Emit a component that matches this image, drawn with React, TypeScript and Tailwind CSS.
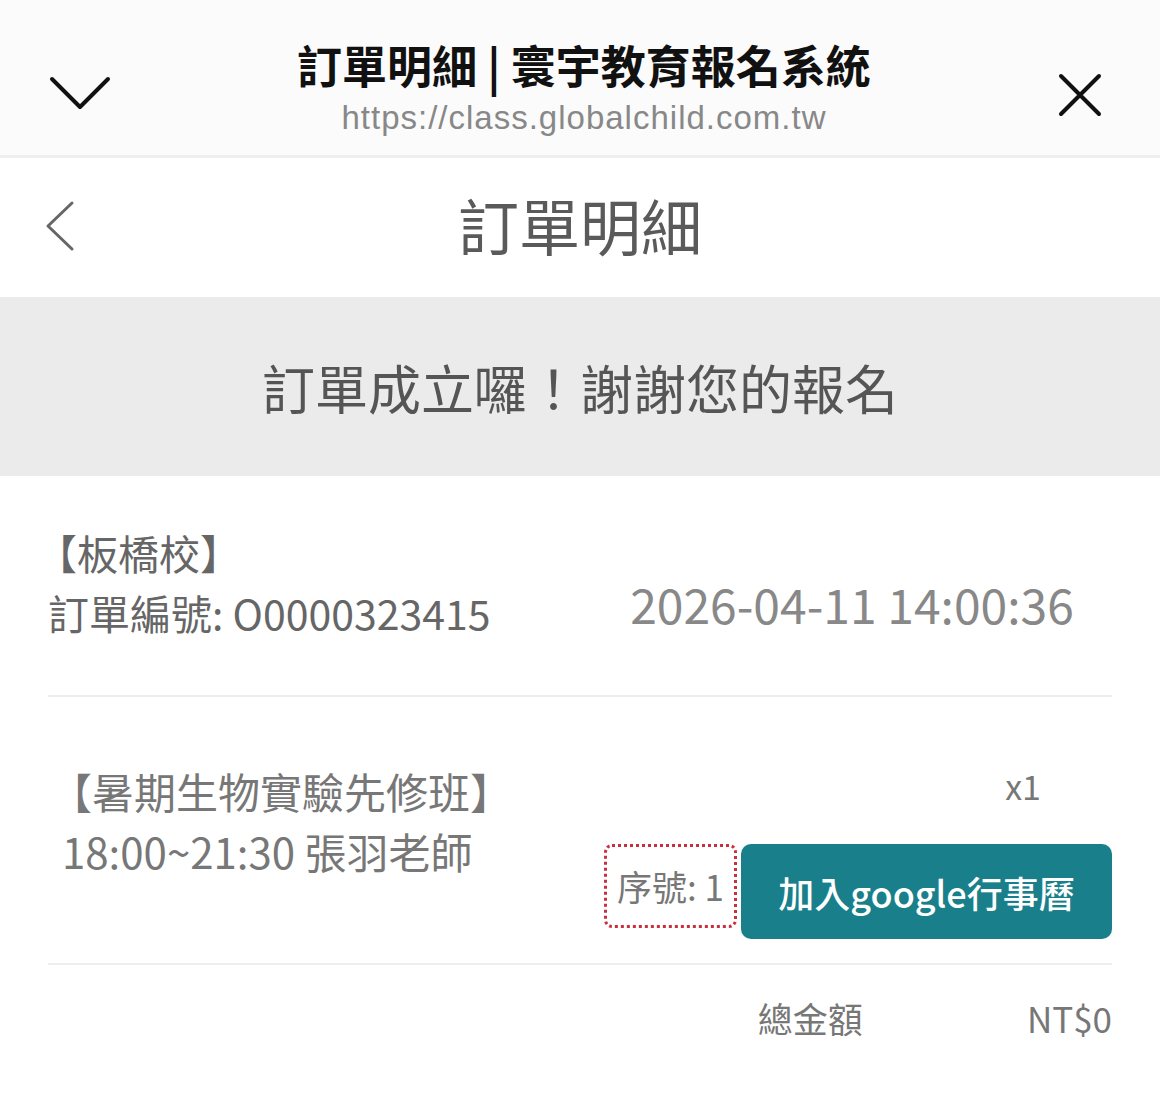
const cjk = { fontFamily: '"Noto Sans CJK TC", "Noto Sans", sans-serif' };

function ChevronDown() {
  return (
    <svg width="64" height="40" viewBox="0 0 64 40" fill="none">
      <path d="M4 6 L32 34 L60 6" stroke="#111" strokeWidth="4" strokeLinecap="round" strokeLinejoin="round" />
    </svg>
  );
}

function CloseIcon() {
  return (
    <svg width="48" height="48" viewBox="0 0 48 48" fill="none">
      <path d="M5 5 L43 43 M43 5 L5 43" stroke="#111" strokeWidth="4" strokeLinecap="round" />
    </svg>
  );
}

function BackIcon() {
  return (
    <svg width="34" height="52" viewBox="0 0 34 52" fill="none">
      <path d="M28 3 L4 26 L28 49" stroke="#666" strokeWidth="3" strokeLinecap="round" strokeLinejoin="round" />
    </svg>
  );
}

export default function App() {
  return (
    <div className="w-[1160px] h-[1116px] bg-white overflow-hidden" style={cjk}>
      {/* browser sheet bar */}
      <div className="h-[158px] bg-[#fbfbfb] flex items-center justify-between px-[48px] border-b-[3px] border-[#eeeeee]">
        <div className="pt-[30px]"><ChevronDown /></div>
        <div className="flex flex-col items-center pt-[20px]">
          <div className="text-[45px] leading-[54px] font-bold text-[#111]">訂單明細 | 寰宇教育報名系統</div>
          <div
            className="text-[33px] leading-[40px] tracking-[1px] text-[#888] mt-[6px]"
            style={{ fontFamily: '"Liberation Sans", Arial, sans-serif' }}
          >
            https://class.globalchild.com.tw
          </div>
        </div>
        <div className="pt-[34px] pr-[8px]"><CloseIcon /></div>
      </div>

      {/* page header */}
      <div className="h-[139px] relative flex items-center justify-center">
        <div className="absolute left-[44px] top-[42px]"><BackIcon /></div>
        <div className="text-[61px] leading-[72px] text-[#5a5a5a] pb-[6px]">訂單明細</div>
      </div>

      {/* banner */}
      <div className="h-[179px] bg-[#ebebeb] flex items-center justify-center">
        <div className="text-[53px] leading-[64px] text-[#555]">訂單成立囉！謝謝您的報名</div>
      </div>

      <div className="px-[48px]">
        {/* order info */}
        <div className="h-[221px] flex items-start border-b-2 border-[#eeeeee]">
          <div className="w-[544px] pt-[46px] text-[41px] leading-[60px] text-[#666]">
            <div className="-ml-[12px]">【板橋校】</div>
            <div>訂單編號: O0000323415</div>
          </div>
          <div className="flex-1 pt-[98px] text-center text-[48px] leading-[58px] text-[#888]">2026-04-11 14:00:36</div>
        </div>

        {/* course item */}
        <div className="h-[268px] flex border-b-2 border-[#eeeeee]">
          <div className="flex-1 pl-[14px] pt-[64px] text-[42px] leading-[60px] text-[#777]">
            <div className="-ml-[12px]">【暑期生物實驗先修班】</div>
            <div>18:00~21:30 張羽老師</div>
          </div>
          <div className="flex flex-col items-end pt-[68px]">
            <div className="text-[34px] leading-[42px] text-[#777] pr-[71px]">x1</div>
            <div className="flex items-start gap-[4px] mt-[37px]">
              <div className="w-[133px] h-[84px] border-[3px] border-dotted border-[#c83040] rounded-[8px] flex items-center justify-center text-[35px] text-[#777]">
                序號: 1
              </div>
              <div className="w-[371px] h-[95px] bg-[#197f8b] rounded-[10px] flex items-center justify-center text-[36px] text-white font-medium">
                加入google行事曆
              </div>
            </div>
          </div>
        </div>

        {/* total */}
        <div className="flex justify-end items-center pt-[28px] text-[35px] leading-[50px] text-[#777]">
          <div>總金額</div>
          <div className="ml-[164px]">NT$0</div>
        </div>
      </div>
    </div>
  );
}
